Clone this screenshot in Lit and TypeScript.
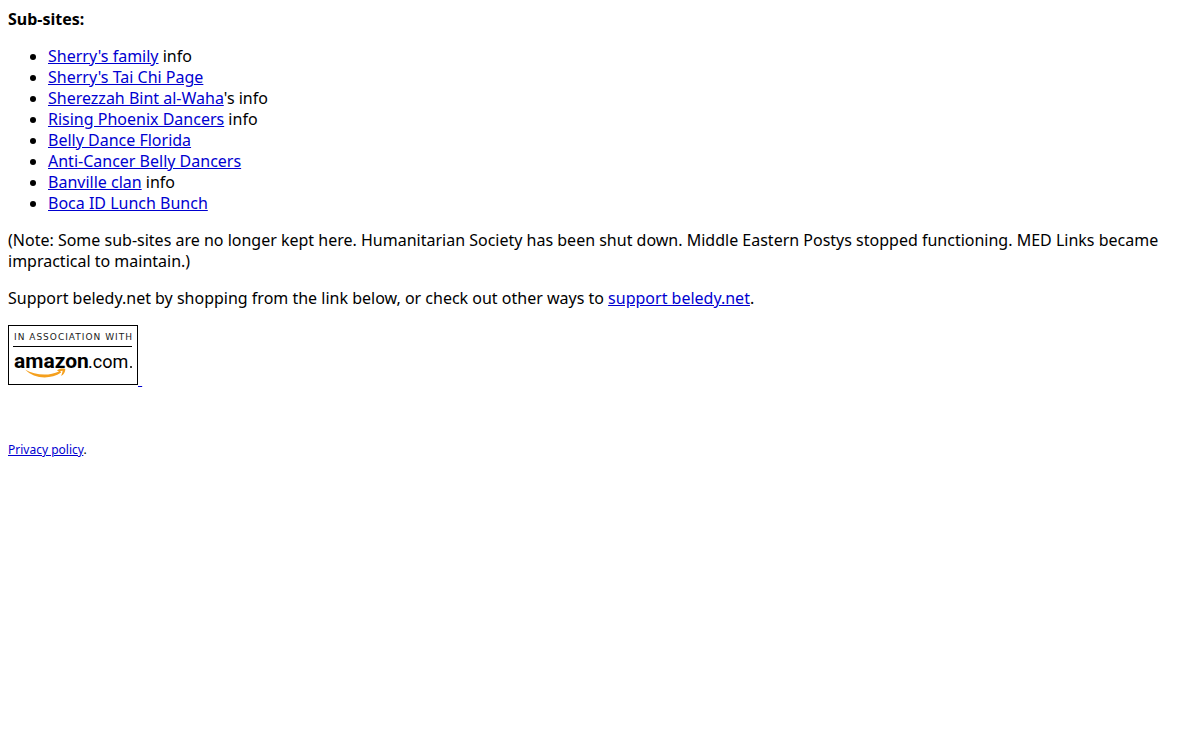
import { LitElement, html, css } from "lit";
import { customElement } from "lit/decorators.js";

const sites = [
  { name: "Sherry's family", tail: " info" },
  { name: "Sherry's Tai Chi Page", tail: "" },
  { name: "Sherezzah Bint al-Waha", tail: "'s info" },
  { name: "Rising Phoenix Dancers", tail: " info" },
  { name: "Belly Dance Florida", tail: "" },
  { name: "Anti-Cancer Belly Dancers", tail: "" },
  { name: "Banville clan", tail: " info" },
  { name: "Boca ID Lunch Bunch", tail: "" },
];

@customElement("amazon-badge")
export class AmazonBadge extends LitElement {
  static styles = css`
    svg { width: 130px; height: 60px; vertical-align: baseline; }
    .caption { font: 9px "DejaVu Sans", sans-serif; letter-spacing: 1px; fill: #222; }
    .bold { font: 700 21px Roboto, sans-serif; }
    .thin { font: 18px Roboto, sans-serif; }
    .frame { fill: #fff; stroke: #000; }
    .rule { stroke: #000; }
    .smile { fill: #f5a01e; }
  `;
  render() {
    return html`<svg viewBox="0 0 130 60" role="img" aria-label="In association with amazon.com">
      <rect class="frame" x="0.5" y="0.5" width="129" height="59"></rect>
      <text class="caption" x="6" y="15">IN ASSOCIATION WITH</text>
      <path class="rule" d="M5 21.5H124"></path>
      <text class="bold" x="6" y="43">amazon</text>
      <text class="thin" x="80" y="43">.com</text>
      <circle cx="123" cy="42" r="1"></circle>
      <path class="smile" d="M17 44.5C27 50.5 41 51.3 51 46.5L49 45.4C51.5 43.6 54.5 43.2 57.3 44C57.5 46.8 55.8 49.5 53.2 51C53.6 49.4 54.4 47.6 54.6 45.7C53.8 45.6 52.8 45.8 52.2 46.3L53.2 47.6C42 55 26 54 17 44.5Z"></path>
    </svg>`;
  }
}

@customElement("app-root")
export class AppRoot extends LitElement {
  static styles = css`
    :host {
      display: block;
      padding: 9px 8px 8px;
      background: #fff;
      color: #000;
      font: 16px/21px "Noto Sans", sans-serif;
    }
    p, ul { margin: 0 0 16px; }
    .title { font-weight: 700; }
    ul { padding-left: 40px; }
    a { color: #0000d0; text-decoration: underline; }
    .badge { margin-bottom: 51px; }
    .small { font-size: 12px; line-height: 18px; }
  `;
  render() {
    return html`
      <p class="title">Sub-sites:</p>
      <ul>${sites.map((s) => html`<li><a href="#">${s.name}</a>${s.tail}</li>`)}</ul>
      <p>(Note: Some sub-sites are no longer kept here. Humanitarian Society has been shut down. Middle Eastern Postys stopped functioning. MED Links became impractical to maintain.)</p>
      <p>Support beledy.net by shopping from the link below, or check out other ways to <a href="#">support beledy.net</a>.</p>
      <p class="badge"><a href="#"><amazon-badge></amazon-badge>&nbsp;</a></p>
      <p class="small"><a href="#">Privacy policy</a>.</p>
    `;
  }
}
